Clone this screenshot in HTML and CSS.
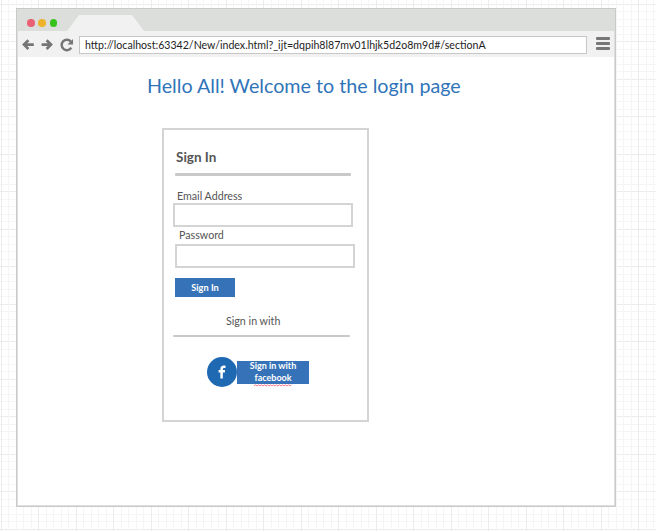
FILE: index.html
```html
<!DOCTYPE html>
<html lang="en">
<head>
<meta charset="utf-8">
<title>Login</title>
<link rel="stylesheet" href="styles.css">
</head>
<body>
<div class="window">
  <div class="tabbar">
    <span class="dot red"></span><span class="dot yellow"></span><span class="dot green"></span>
    <svg class="tab" width="78" height="16" viewBox="0 0 78 16"><path d="M0 16L12 0H65L77 16Z" fill="#f1f1f1"/></svg>
  </div>
  <div class="toolbar">
    <svg class="nav" width="60" height="26" viewBox="0 0 60 26" fill="none" stroke="#757575">
      <path d="M11.400 9.200L7 13.600L11.400 18M7.400 13.600H16.800" stroke-width="2.700"/>
      <path d="M29.600 9.200L34 13.600L29.600 18M33.600 13.600H24.600" stroke-width="2.700"/>
      <path d="M53.800 10.600A5.200 5.200 0 1 0 54.300 16.700" stroke-width="2.400"/>
      <path d="M56 8V13.400H50.500Z" fill="#757575" stroke="none"/>
    </svg>
    <div class="url">http://localhost:63342/New/index.html?_ijt=dqpih8l87mv01lhjk5d2o8m9d#/sectionA</div>
    <div class="menu"><i></i><i></i><i></i></div>
  </div>
  <main class="page">
    <h1>Hello All! Welcome to the login page</h1>
    <form class="card">
      <h2>Sign In</h2>
      <div class="rule"></div>
      <label class="email-label">Email Address</label>
      <div class="field email"></div>
      <label class="password-label">Password</label>
      <div class="field password"></div>
      <div class="button">Sign In</div>
      <p class="with">Sign in with</p>
      <div class="rule thin"></div>
      <div class="social">
        <svg width="30" height="30" viewBox="0 0 30 30"><circle cx="15" cy="15" r="15" fill="#1f69b3"/><path d="M14.600 21.500V14.700M11.600 14.300H18M14.600 15V12.200Q14.600 9.700 17 9.700H18.500" fill="none" stroke="#fff" stroke-width="2.500"/></svg>
        <div class="facebook"><div class="caption">Sign in with<br><span class="word">facebook<svg class="squiggle" width="38" height="3" viewBox="0 0 38 3"><path d="M0 2L1.500 .8L3 2L4.500 .8L6 2L7.500 .8L9 2L10.500 .8L12 2L13.500 .8L15 2L16.500 .8L18 2L19.500 .8L21 2L22.500 .8L24 2L25.500 .8L27 2L28.500 .8L30 2L31.500 .8L33 2L34.500 .8L36 2L37.500 .8" fill="none" stroke="#f26a78" stroke-width=".9"/></svg></span></div></div>
      </div>
    </form>
  </main>
</div>
</body>
</html>
```
FILE: styles.css
```css
* { box-sizing: border-box; }
body {
  --major: #ececec;
  --minor: #f5f5f5;
  --stops: var(--major) 0 1px, transparent 1px 7px, var(--minor) 7px 8px, transparent 8px 15px,
    var(--minor) 15px 16px, transparent 16px 22px, var(--minor) 22px 23px, transparent 23px 30px,
    var(--minor) 30px 31px, transparent 31px 37px, var(--major) 37px 38px, transparent 38px 45px,
    var(--minor) 45px 46px, transparent 46px 52px, var(--minor) 52px 53px, transparent 53px 60px,
    var(--minor) 60px 61px, transparent 61px 67px, var(--minor) 67px 68px, transparent 68px;
  margin: 0;
  height: 531px;
  padding: 8px 0 0 16px;
  overflow: hidden;
  font-family: Lato, "Liberation Sans", sans-serif;
  color: #555;
  background-color: #fff;
  background-image: linear-gradient(90deg, var(--stops)), linear-gradient(180deg, var(--stops));
  background-position: 1px 0, 0 4px;
  background-size: 75px 75px;
}
.window {
  width: 600px;
  height: 499px;
  border: 1px solid #c9c9c9;
  outline: 1px solid #dedede;
  outline-offset: -2px;
  background: #fff;
}
.tabbar {
  height: 22px;
  display: flex;
  align-items: flex-end;
  background: #dcdedb;
  border-top: 1px solid #d3d3d3;
  padding-left: 10px;
}
.dot { width: 7.500px; height: 7.500px; border-radius: 50%; margin: 0 3.800px 4.500px 0; }
.red { background: #ea6074; }
.yellow { background: #edb32c; }
.green { background: #38c21d; }
.tab { margin-left: 6.500px; }
.toolbar { height: 26px; display: flex; background: #f1f1f1; }
.nav { flex: none; }
.url {
  width: 508px;
  height: 18px;
  margin: 5px 0 0 2px;
  padding-left: 5px;
  border: 1px solid #c7c7c7;
  background: #fff;
  color: #222;
  font-size: 10.600px;
  line-height: 16px;
  white-space: nowrap;
}
.menu { margin: 6px 0 0 9px; display: grid; gap: 2px; align-content: start; }
.menu i { display: block; width: 14px; height: 3px; border-radius: 1px; background: #777; }
.page { display: flex; flex-direction: column; align-items: flex-start; }
h1 {
  margin: 15px 0 0 130px;
  font-size: 19.700px;
  font-weight: 400;
  line-height: 28px;
  color: #2f74b9;
  white-space: nowrap;
}
.card {
  width: 207px;
  height: 294px;
  margin: 28px 0 0 145px;
  border: 2px solid #d4d4d4;
  display: flex;
  flex-direction: column;
  align-items: flex-start;
  font-size: 10.700px;
  line-height: 14px;
}
h2 { margin: 17px 0 0 12px; font-size: 13.500px; line-height: 20px; height: 20px; }
.rule { width: 176px; height: 3px; margin: 6px 0 0 11px; background: #c9c9c9; border-radius: 1px; }
.email-label { margin: 13px 0 0 13px; }
.field { height: 24px; border: 2px solid #d4d4d4; background: #fff; }
.email { width: 180px; margin: 0 0 0 9px; }
.password-label { margin: 1px 0 0 15px; }
.password { width: 180px; margin: 2px 0 0 11px; }
.button {
  width: 60px;
  height: 19px;
  margin: 10px 0 0 11px;
  background: #3672b7;
  color: #fff;
  font-size: 9.200px;
  font-weight: 700;
  line-height: 19px;
  text-align: center;
}
.with { margin: 17px 0 0 62px; }
.thin { width: 177px; height: 2px; margin: 7px 0 0 9px; }
.social { display: flex; align-items: center; margin: 20px 0 0 43px; }
.facebook {
  width: 72px;
  height: 23px;
  background: #3672b7;
  color: #fff;
  font-size: 9px;
  font-weight: 700;
  line-height: 12px;
  text-align: center;
}
.caption { margin-top: -1px; }
.word { position: relative; }
.squiggle { position: absolute; left: 0; top: 12px; }
```
